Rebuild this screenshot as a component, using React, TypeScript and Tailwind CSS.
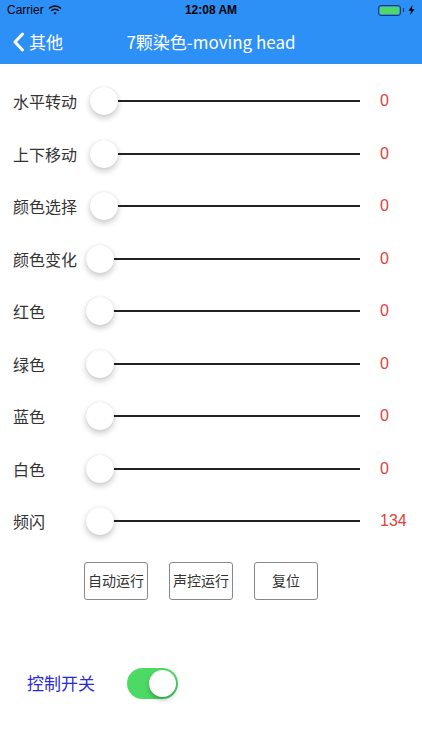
import React, { useState } from "react";

const rows = [
  { label: "水平转动", value: 0, offset: 4 },
  { label: "上下移动", value: 0, offset: 4 },
  { label: "颜色选择", value: 0, offset: 4 },
  { label: "颜色变化", value: 0, offset: 0 },
  { label: "红色", value: 0, offset: 0 },
  { label: "绿色", value: 0, offset: 0 },
  { label: "蓝色", value: 0, offset: 0 },
  { label: "白色", value: 0, offset: 0 },
  { label: "频闪", value: 134, offset: 0 },
];

const font = { fontFamily: '"Noto Sans CJK SC", "Liberation Sans", sans-serif' };

function StatusBar() {
  return (
    <div className="h-5 flex items-center justify-between px-[7px] text-black text-[12px]" style={{ fontFamily: '"Liberation Sans", sans-serif' }}>
      <div className="flex items-center gap-1 w-[120px]">
        <span>Carrier</span>
        <svg width="14" height="10" viewBox="0 0 14 10">
          <path d="M1 3.5a8.5 8.5 0 0 1 12 0" stroke="#000" strokeWidth="1.6" fill="none" />
          <path d="M3.3 5.8a5.2 5.2 0 0 1 7.4 0" stroke="#000" strokeWidth="1.6" fill="none" />
          <path d="M7 9.5 5.4 7.9a2.3 2.3 0 0 1 3.2 0z" fill="#000" />
        </svg>
      </div>
      <span className="font-bold">12:08 AM</span>
      <div className="flex items-center justify-end gap-[2px] w-[120px]">
        <div className="w-[23px] h-[11px] rounded-[3px] border border-[#1a3a5a] p-[1px]">
          <div className="w-full h-full rounded-[1px] bg-[#4cd964]" />
        </div>
        <div className="w-[1.5px] h-[4px] bg-[#1a3a5a]" />
        <svg width="7" height="10" viewBox="0 0 7 10" className="ml-[2px]">
          <path d="M4.5 0 0.5 5.8h2.6L2.3 10 6.5 4.2H3.9z" fill="#000" />
        </svg>
      </div>
    </div>
  );
}

function Slider({ offset }: { offset: number }) {
  return (
    <div className="flex-1 flex items-center relative h-8">
      <div className="absolute left-[12px] right-0 h-[2px] bg-[#222]" />
      <div
        className="relative w-7 h-7 rounded-full bg-white shadow-[0_3px_6px_rgba(0,0,0,0.22),0_0_1px_rgba(0,0,0,0.15)]"
        style={{ marginLeft: offset }}
      />
    </div>
  );
}

export default function App() {
  const [on, setOn] = useState(true);

  return (
    <div className="w-[422px] h-[750px] bg-white flex flex-col" style={font}>
      <div className="bg-[#2d90f6]">
        <StatusBar />
        <div className="h-[44px] flex items-center relative text-white">
          <div className="flex items-center pl-[12px] gap-[4px]">
            <svg width="13" height="20" viewBox="0 0 13 20">
              <path d="M10.5 2 3 10l7.5 8" stroke="#fff" strokeWidth="3" fill="none" strokeLinecap="round" strokeLinejoin="round" />
            </svg>
            <span className="text-[17px]">其他</span>
          </div>
          <div className="absolute left-0 right-0 text-center text-[17px] pointer-events-none">7颗染色-moving head</div>
        </div>
      </div>

      <div className="pt-[11px] flex flex-col">
        {rows.map((row) => (
          <div key={row.label} className="h-[52.5px] flex items-center">
            <div className="w-[86px] pl-[13px] text-[16px] text-[#333]">{row.label}</div>
            <Slider offset={row.offset} />
            <div className="w-[62px] pl-[20px] text-[16px] text-[#e2403a]" style={{ fontFamily: '"Liberation Sans", sans-serif' }}>
              {row.value}
            </div>
          </div>
        ))}
      </div>

      <div className="flex pl-[84px] gap-[21px] mt-[14px]">
        {["自动运行", "声控运行", "复位"].map((b) => (
          <button
            key={b}
            className="w-[64px] h-[38px] border border-[#888] rounded-[3px] text-[14px] text-[#333] flex items-center justify-center"
          >
            {b}
          </button>
        ))}
      </div>

      <div className="flex items-center mt-[68px] pl-[27px]">
        <span className="text-[17px] text-[#2a2ad8] w-[100px]">控制开关</span>
        <button
          onClick={() => setOn(!on)}
          className={`w-[51px] h-[31px] rounded-full p-[2px] flex ${on ? "bg-[#4cd964] justify-end" : "bg-[#e5e5e5] justify-start"}`}
        >
          <div className="w-[27px] h-[27px] rounded-full bg-white shadow-[0_3px_4px_rgba(0,0,0,0.25)]" />
        </button>
      </div>
    </div>
  );
}
